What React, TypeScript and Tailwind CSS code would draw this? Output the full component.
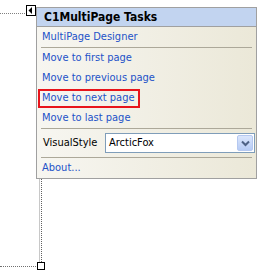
import React from 'react';

const links = ['Move to first page', 'Move to previous page', 'Move to next page', 'Move to last page'];

const Separator = () => <div className="mx-[4px] h-px bg-[#aca899]" />;

const App: React.FC = () => {
  return (
    <div className="relative w-[261px] h-[276px] bg-white overflow-hidden" style={{ fontFamily: '"DejaVu Sans Condensed", "Liberation Sans", sans-serif' }}>
      {/* designer adornments */}
      <div className="absolute left-0 top-[13px] w-[27px] border-t border-dotted border-[#808080]" />
      <div className="absolute left-[39px] top-[179px] w-px h-[85px] bg-[#c8c8c8]" />
      <div className="absolute left-[41px] top-[179px] h-[85px] border-l border-dotted border-[#606060]" />
      <div className="absolute left-0 top-[266px] w-[38px] border-t border-dotted border-[#707070]" />
      <div className="absolute left-[37px] top-[262px] w-[8px] h-[8px] border border-black bg-white" />

      <div className="absolute left-[26px] top-[5px] w-[10px] h-[11px] border border-black bg-white flex items-center justify-center">
        <svg width="6" height="7" viewBox="0 0 6 7">
          <path d="M4 0 L4 7 L0.5 3.5 Z" fill="#000" />
        </svg>
      </div>

      {/* smart tag panel */}
      <div className="absolute left-[36px] top-[7px] w-[221px] h-[172px] border border-[#a0a0a0] bg-gradient-to-r from-[#f7f6f1] to-[#ebe8d8] flex flex-col text-[11px] whitespace-nowrap">
        <div className="h-[19px] bg-[#c2d4f0] border-b border-[#a0a0a0] flex items-center pl-[7px] font-bold text-[12px] text-black">
          C1MultiPage Tasks
        </div>
        <div className="h-[20px] flex items-center pl-[5px] text-[#2352c8]">MultiPage Designer</div>
        <Separator />
        {links.map((l) => (
          <div key={l} className="h-[20px] flex items-center pl-[1px]">
            <span
              className={`h-[19px] flex items-center text-[#2352c8] ${
                l === 'Move to next page' ? 'border-2 border-[#e8141b] w-[102px] pl-[2px]' : 'pl-[4px]'
              }`}
            >
              {l}
            </span>
          </div>
        ))}
        <Separator />
        <div className="h-[28px] flex items-center pl-[6px]">
          <span className="w-[62px] text-black">VisualStyle</span>
          <div className="w-[150px] h-[20px] border border-[#7f9db9] bg-white flex items-center justify-between pl-[3px] pr-[1px]">
            <span className="text-black">ArcticFox</span>
            <div className="w-[16px] h-[16px] rounded-[2px] border border-[#b5c8f0] bg-gradient-to-b from-[#dbe6fc] to-[#b6cbf5] flex items-center justify-center">
              <svg width="9" height="7" viewBox="0 0 9 7">
                <path d="M1 1.5 L4.5 5 L8 1.5" fill="none" stroke="#4d6185" strokeWidth="2" />
              </svg>
            </div>
          </div>
        </div>
        <Separator />
        <div className="h-[20px] flex items-center pl-[5px] text-[#2352c8]">About...</div>
      </div>
    </div>
  );
};

export default App;
